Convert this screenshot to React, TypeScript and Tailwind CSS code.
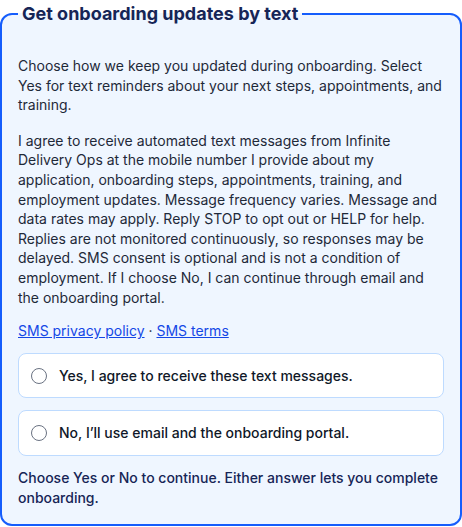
import { useState } from "react";

const options = [
    { value: "yes", label: "Yes, I agree to receive these text messages." },
    { value: "no", label: "No, I\u2019ll use email and the onboarding portal." },
];

export default function App() {
    const [choice, setChoice] = useState<string | null>(null);

    return (
        <div className="font-['Inter',sans-serif] text-sm leading-[1.4] text-gray-800">
            <fieldset className="m-0 rounded-xl border-2 border-blue-600 bg-blue-50 px-4 pt-7 pb-[17px]">
                <legend className="px-1 text-lg leading-7 font-bold text-blue-950">
                    Get onboarding updates by text
                </legend>
                <div className="flex flex-col gap-3">
                    <p>
                        Choose how we keep you updated during onboarding. Select Yes for text reminders about
                        your next steps, appointments, and training.
                    </p>
                    <p className="mt-1">
                        I agree to receive automated text messages from Infinite Delivery Ops at the mobile
                        number I provide about my application, onboarding steps, appointments, training, and
                        employment updates. Message frequency varies. Message and data rates may apply. Reply
                        STOP to opt out or HELP for help. Replies are not monitored continuously, so responses
                        may be delayed. SMS consent is optional and is not a condition of employment. If I
                        choose No, I can continue through email and the onboarding portal.
                    </p>
                    <p className="mt-0.5">
                        <a href="#" className="text-blue-700 underline">SMS privacy policy</a>
                        {" \u00b7 "}
                        <a href="#" className="text-blue-700 underline">SMS terms</a>
                    </p>
                    {options.map((o) => (
                        <label
                            key={o.value}
                            className="flex cursor-pointer items-center gap-3 rounded-lg border border-blue-200 bg-white px-3 py-3"
                        >
                            <input
                                type="radio"
                                name="sms"
                                value={o.value}
                                checked={choice === o.value}
                                onChange={() => setChoice(o.value)}
                                className="h-4 w-4 shrink-0 appearance-none rounded-full border border-gray-500 bg-white checked:border-[5px] checked:border-blue-600"
                            />
                            <span className="font-medium text-gray-900">{o.label}</span>
                        </label>
                    ))}
                    <p className="font-medium text-blue-950">
                        Choose Yes or No to continue. Either answer lets you complete onboarding.
                    </p>
                </div>
            </fieldset>
        </div>
    );
}
